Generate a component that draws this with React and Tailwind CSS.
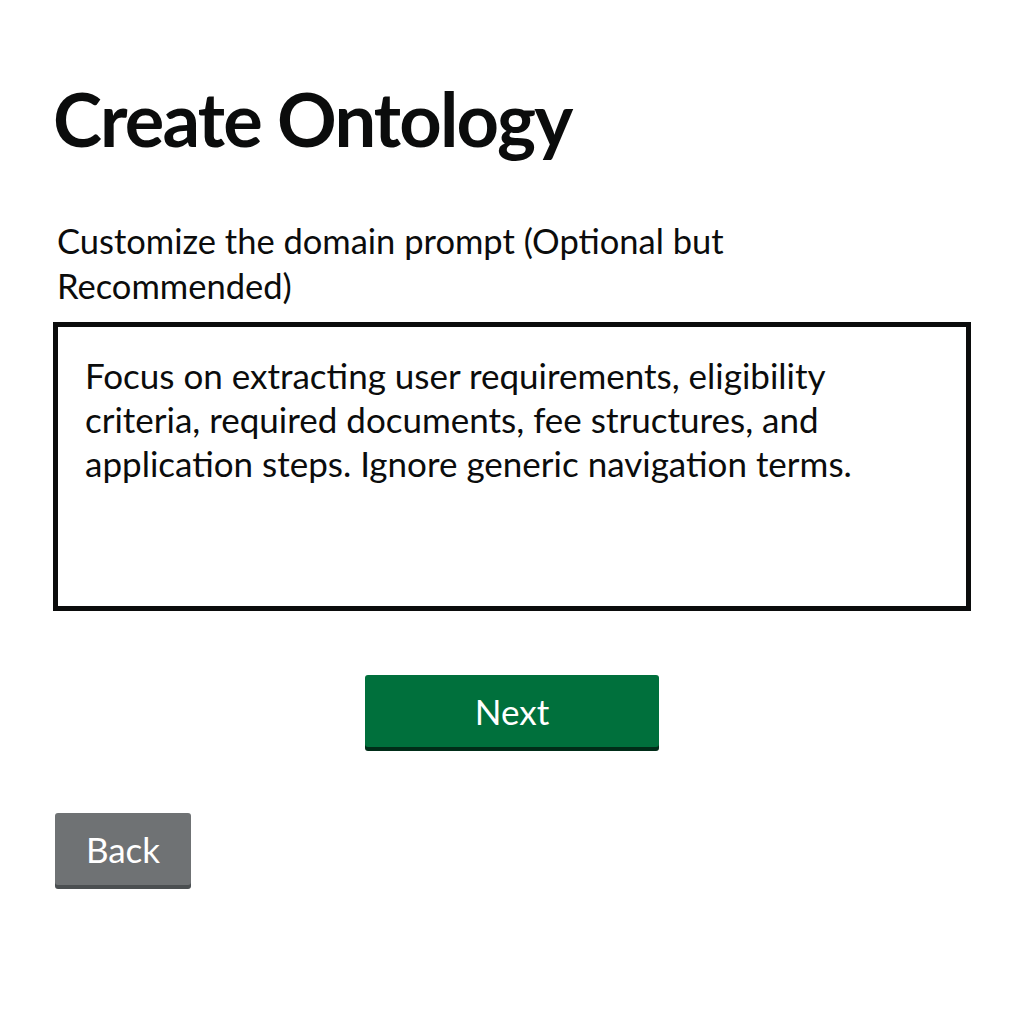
import React, { useState } from 'react';

const defaultPrompt =
  'Focus on extracting user requirements, eligibility criteria, required documents, fee structures, and application steps. Ignore generic navigation terms.';

export default function App() {
  const [prompt, setPrompt] = useState(defaultPrompt);

  return (
    <main className="min-h-screen bg-white px-[53px] pt-[82px] font-['Lato','Noto_Sans',sans-serif] text-[#0b0c0c]">
      <h1 className="text-[74px] font-bold leading-none tracking-[-1.8px]">Create Ontology</h1>

      {/* Domain prompt field */}
      <label htmlFor="domain-prompt" className="mt-[62px] block max-w-[720px] pl-[4px] text-[34.5px] leading-[45px]">
        Customize the domain prompt (Optional but Recommended)
      </label>
      <textarea
        id="domain-prompt"
        value={prompt}
        onChange={(e) => setPrompt(e.target.value)}
        rows={6}
        className="mt-[14px] block h-[289px] w-full resize-none border-[5px] border-[#0b0c0c] bg-white pl-[27px] pr-[80px] pt-[26px] text-[35px] leading-[44px] outline-none"
      />

      {/* Actions */}
      <div className="mt-[64px] flex justify-center">
        <button className="h-[72px] w-[294px] rounded-[3px] bg-[#00703c] text-[35px] text-white shadow-[0_4px_0_#002d18]">
          Next
        </button>
      </div>
      <div className="mt-[66px]">
        <button className="ml-[2px] h-[72px] w-[136px] rounded-[3px] bg-[#6f7274] text-[35px] text-white shadow-[0_4px_0_#4b4f51]">
          Back
        </button>
      </div>
    </main>
  );
}
